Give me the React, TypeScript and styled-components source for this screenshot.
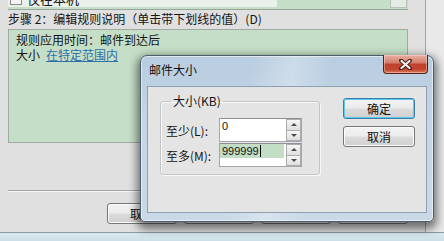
import React from 'react';
import styled, { createGlobalStyle } from 'styled-components';

const GlobalStyle = createGlobalStyle`
  html, body { margin: 0; padding: 0; }
  * { box-sizing: border-box; }
  body {
    width: 444px;
    height: 241px;
    overflow: hidden;
    background: #e8e8e8;
    font-family: "Noto Sans CJK SC", "Liberation Sans", sans-serif;
    font-size: 12px;
    color: #141414;
  }
`;

const Screen = styled.div`
  position: relative;
  width: 444px;
  height: 241px;
  display: flex;
  flex-direction: column;
  overflow: hidden;
`;

const Main = styled.div`
  flex: 1;
  display: flex;
`;

const Wizard = styled.div`
  width: 426px;
  display: flex;
  flex-direction: column;
  padding: 0 17px 8px 8px;
  background: #e0e0e0;
  border-right: 1px solid #a2a2a2;
`;

const Side = styled.div`
  flex: 1;
  background: #e9e9e9;
`;

const BottomFrame = styled.div`
  height: 9px;
  border-top: 1px solid #8c9ba5;
  background: linear-gradient(to bottom, #dbe9ef, #cde0e8);
`;

/* step 1 list, only its last pixels are visible */
const TopList = styled.div`
  height: 10px;
  display: flex;
  background: #c5dec7;
  border-bottom: 1px solid #9aa59b;
  overflow: hidden;
`;

const TopRow = styled.div`
  width: 269px;
  height: 16px;
  margin-top: -9px;
  display: flex;
  align-items: center;
  gap: 5px;
  padding-left: 2px;
  background: #eaf1ea;
  font-size: 13px;
  line-height: 16px;
`;

const Check = styled.span`
  width: 12px;
  height: 12px;
  border: 1px solid #8a8a8a;
  background: #f4f4f4;
`;

const ScrollStub = styled.span`
  width: 17px;
  height: 8px;
  margin-left: auto;
  margin-right: 1px;
  border: 1px solid #b9c2ba;
  border-top: none;
  background: #e6ebe6;
`;

const StepLabel = styled.div`
  height: 18px;
  line-height: 18px;
  margin-bottom: 1px;
  white-space: nowrap;
`;

const DescPanel = styled.div`
  height: 114px;
  padding: 2px 7px;
  background: #c5dec7;
  border: 1px solid #a1aaa2;
  line-height: 15px;
`;

const DescLine = styled.div`
  display: flex;
  gap: 6px;
  white-space: nowrap;
`;

const LinkText = styled.span`
  color: #2f70a8;
  text-decoration: underline;
`;

const Spacer = styled.div`
  flex: 1;
`;

const Separator = styled.div`
  height: 2px;
  border-top: 1px solid #a3a3a3;
  border-bottom: 1px solid #f6f6f6;
`;

const ButtonRow = styled.div`
  margin-top: 11px;
  display: flex;
  justify-content: flex-end;
  gap: 7px;
`;

const WinButton = styled.button<{ $width?: number; $primary?: boolean }>`
  width: ${({ $width }) => $width ?? 70}px;
  height: 21px;
  padding: 0;
  font-family: inherit;
  font-size: 12px;
  color: #111;
  border-radius: 3px;
  border: 1px solid ${({ $primary }) => ($primary ? '#3b7ea8' : '#777')};
  box-shadow: inset 0 0 0 1px ${({ $primary }) => ($primary ? '#5cc9ea' : '#fbfbfb')};
  background: linear-gradient(to bottom, #f3f3f3 0%, #ebebeb 48%, #dcdcdc 52%, #cfcfcf 100%);
`;

/* 邮件大小 dialog, floating over the wizard */
const Dialog = styled.div`
  position: absolute;
  left: 140px;
  top: 55px;
  width: 294px;
  height: 167px;
  display: flex;
  flex-direction: column;
  padding: 0 6px 8px 6px;
  border: 1px solid #4c5d6d;
  border-radius: 7px 7px 5px 5px;
  background:
    linear-gradient(100deg, rgba(255,255,255,0) 35%, rgba(255,255,255,0.28) 48%, rgba(255,255,255,0) 60%),
    linear-gradient(to bottom, #b9cde0 0%, #c3d5e6 40%, #c9d9e7 100%);
  box-shadow: 0 4px 9px 3px rgba(0, 0, 0, 0.5), inset 0 0 0 1px rgba(255, 255, 255, 0.55);
`;

const TitleBar = styled.div`
  height: 30px;
  display: flex;
  align-items: flex-start;
`;

const Title = styled.div`
  padding: 5px 0 0 2px;
  line-height: 18px;
  font-size: 12px;
  color: #111;
`;

const CloseButton = styled.div`
  width: 45px;
  height: 19px;
  margin: -1px -1px 0 auto;
  display: flex;
  align-items: center;
  justify-content: center;
  border: 1px solid #5b1d17;
  border-top: none;
  border-radius: 0 0 4px 4px;
  background: linear-gradient(to bottom, #e8b0a3 0%, #d47f6f 42%, #c0412d 52%, #c3462f 80%, #da7d5c 100%);
  box-shadow: inset 0 0 0 1px rgba(255, 220, 210, 0.45);
`;

const Client = styled.div`
  flex: 1;
  display: flex;
  align-items: flex-start;
  gap: 23px;
  padding: 11px 0 0 12px;
  background: #e4e4e4;
  border: 1px solid #8ca0b2;
`;

const Group = styled.fieldset`
  width: 160px;
  margin: -4px 0 0 0;
  padding: 10px 0 7px 5px;
  border: 1px solid #c3c7ca;
  border-radius: 3px;
  box-shadow: 1px 1px 0 #f8f8f8, inset 1px 1px 0 #f8f8f8;
`;

const Legend = styled.legend`
  margin-left: 5px;
  padding: 0 2px;
  line-height: 14px;
  font-size: 12px;
`;

const FieldGrid = styled.div`
  display: grid;
  grid-template-columns: 53px 83px;
  grid-auto-rows: 24px;
  row-gap: 1px;
  align-items: center;
`;

const FieldLabel = styled.span`
  white-space: nowrap;
`;

const SpinEdit = styled.div`
  width: 83px;
  height: 24px;
  display: flex;
  border: 1px solid #a3a6ab;
  border-top-color: #8d9096;
  background: #fff;
`;

const EditText = styled.div<{ $tint?: boolean }>`
  width: 64px;
  height: 14px;
  display: flex;
  align-items: center;
  padding-left: 2px;
  font-family: "Liberation Sans", Arial, sans-serif;
  font-size: 11px;
  background: ${({ $tint }) => ($tint ? '#c3ddc4' : 'transparent')};
`;

const Caret = styled.span`
  width: 1px;
  height: 12px;
  margin-left: 1px;
  background: #000;
`;

const Spin = styled.div`
  width: 15px;
  margin-left: auto;
  display: flex;
  flex-direction: column;
`;

const SpinHalf = styled.div<{ $down?: boolean }>`
  flex: 1;
  display: flex;
  align-items: center;
  justify-content: center;
  border: 1px solid #acacac;
  border-top: ${({ $down }) => ($down ? 'none' : '1px solid #acacac')};
  background: linear-gradient(to bottom, #f6f6f6, #dedede);
  &::after {
    content: '';
    border-left: 3px solid transparent;
    border-right: 3px solid transparent;
    ${({ $down }) => ($down ? 'border-top: 3px solid #4a4a4a;' : 'border-bottom: 3px solid #4a4a4a;')}
  }
`;

const ButtonColumn = styled.div`
  display: flex;
  flex-direction: column;
  gap: 7px;
`;

const CloseGlyph = () => (
  <svg width="13" height="11" viewBox="0 0 13 11">
    <path d="M2 1.5 L11 9.5 M11 1.5 L2 9.5" stroke="#4a1d18" strokeWidth="4" strokeLinecap="round" />
    <path d="M2.5 2 L10.5 9 M10.5 2 L2.5 9" stroke="#f4f0ee" strokeWidth="2.2" strokeLinecap="round" />
  </svg>
);

const SpinField = ({ value, tint, caret }: { value: string; tint?: boolean; caret?: boolean }) => (
  <SpinEdit>
    <EditText $tint={tint}>
      {value}
      {caret && <Caret />}
    </EditText>
    <Spin>
      <SpinHalf />
      <SpinHalf $down />
    </Spin>
  </SpinEdit>
);

export default function App() {
  return (
    <>
      <GlobalStyle />
      <Screen>
        <Main>
          <Wizard>
            <TopList>
              <TopRow>
                <Check />
                仅在本机
              </TopRow>
              <ScrollStub />
            </TopList>
            <StepLabel>步骤 2：编辑规则说明（单击带下划线的值）(D)</StepLabel>
            <DescPanel>
              <DescLine>规则应用时间：邮件到达后</DescLine>
              <DescLine>
                <span>大小</span>
                <LinkText>在特定范围内</LinkText>
              </DescLine>
            </DescPanel>
            <Spacer />
            <Separator />
            <ButtonRow>
              <WinButton>取消</WinButton>
              <WinButton>&lt; 上一步(B)</WinButton>
              <WinButton>下一步(N) &gt;</WinButton>
              <WinButton>完成</WinButton>
            </ButtonRow>
          </Wizard>
          <Side />
        </Main>
        <BottomFrame />

        <Dialog>
          <TitleBar>
            <Title>邮件大小</Title>
            <CloseButton>
              <CloseGlyph />
            </CloseButton>
          </TitleBar>
          <Client>
            <Group>
              <Legend>大小(KB)</Legend>
              <FieldGrid>
                <FieldLabel>至少(L):</FieldLabel>
                <SpinField value="0" />
                <FieldLabel>至多(M):</FieldLabel>
                <SpinField value="999999" tint caret />
              </FieldGrid>
            </Group>
            <ButtonColumn>
              <WinButton $width={72} $primary>确定</WinButton>
              <WinButton $width={72}>取消</WinButton>
            </ButtonColumn>
          </Client>
        </Dialog>
      </Screen>
    </>
  );
}
